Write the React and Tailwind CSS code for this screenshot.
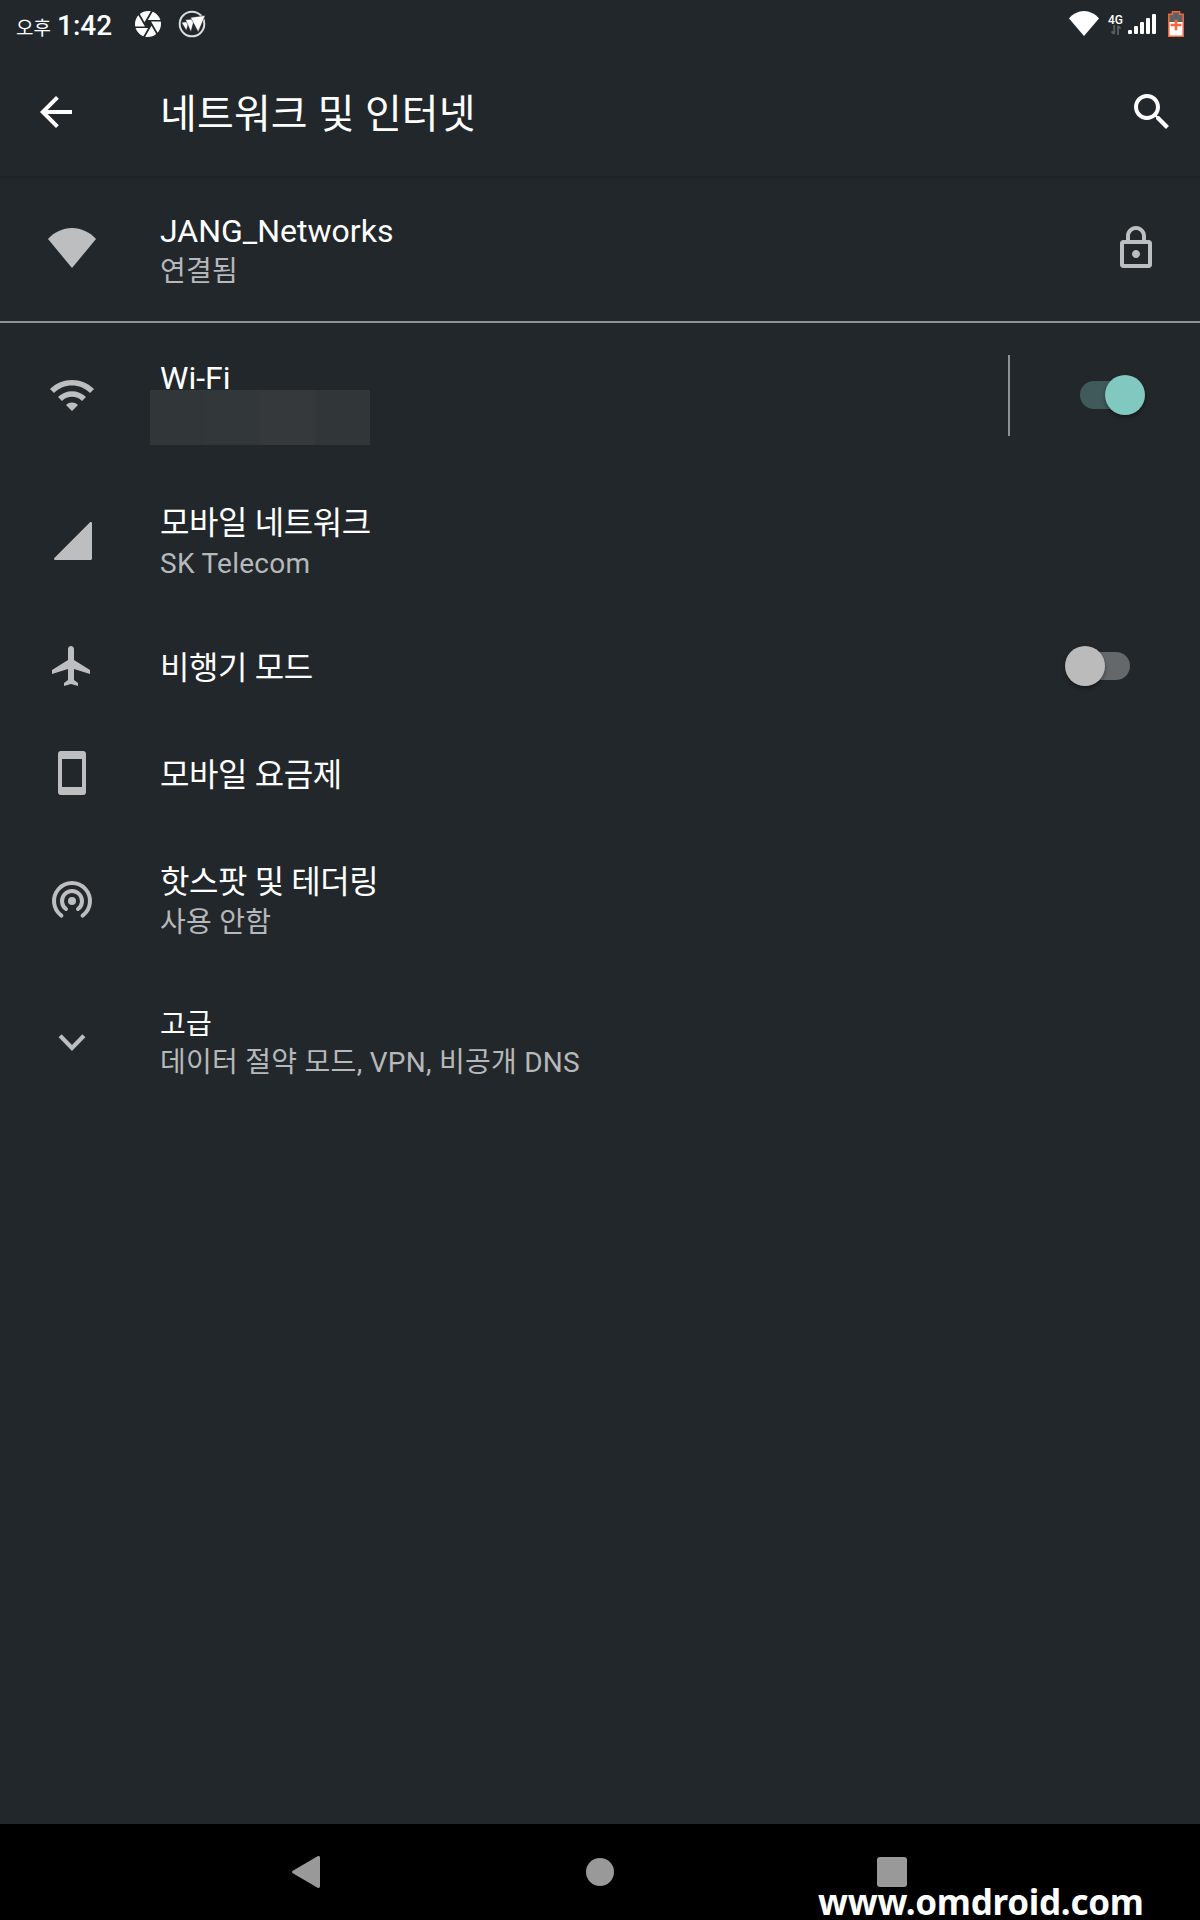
const PATHS = {
  back: 'M20 11H7.83l5.59-5.59L12 4l-8 8 8 8 1.41-1.41L7.83 13H20v-2z',
  search:
    'M15.5 14h-.79l-.28-.27C15.41 12.59 16 11.11 16 9.5 16 5.91 13.09 3 9.5 3S3 5.91 3 9.5 5.91 16 9.5 16c1.61 0 3.09-.59 4.23-1.57l.27.28v.79l5 4.99L20.49 19l-4.99-5zm-6 0C7.01 14 5 11.99 5 9.5S7.01 5 9.5 5 14 7.01 14 9.5 11.99 14 9.5 14z',
  wifi: 'M1 9l2 2c4.97-4.97 13.03-4.97 18 0l2-2C16.93 2.93 7.08 2.93 1 9zm8 8l3 3 3-3c-1.65-1.66-4.34-1.66-6 0zm-4-4l2 2c2.76-2.76 7.24-2.76 10 0l2-2C15.14 9.14 8.87 9.14 5 13z',
  wifiFull: 'M12 22L0 7.5C3.2 4 7.4 2 12 2s8.8 2 12 5.5L12 22z',
  plane:
    'M21 16v-2l-8-5V3.5c0-.83-.67-1.5-1.5-1.5S10 2.67 10 3.5V9l-8 5v2l8-2.5V19l-2 1.5V22l3.5-1 3.5 1v-1.5L13 19v-5.5l8 2.5z',
  phone:
    'M17.6 1H6.4C5.6 1 5 1.6 5 2.4v19.2c0 .8.6 1.4 1.4 1.4h11.2c.8 0 1.4-.6 1.4-1.4V2.4c0-.8-.6-1.4-1.4-1.4zM17 19H7V5h10v14z',
  signal: 'M22 3.6v17.8c0 .35-.25.6-.6.6H3.6c-.55 0-.8-.6-.42-1L21 3.18c.4-.38 1-.13 1 .42z',
  chevron: 'M17.2 8.1L12 13.5 6.8 8.1 5.3 9.6l6.7 6.9 6.7-6.9z',
  lock: 'M18.4 8H17V6c0-2.76-2.24-5-5-5S7 3.24 7 6v2H5.6C4.7 8 4 8.7 4 9.6v10.8c0 .9.7 1.6 1.6 1.6h12.8c.9 0 1.6-.7 1.6-1.6V9.6c0-.9-.7-1.6-1.6-1.6zM9 6c0-1.66 1.34-3 3-3s3 1.34 3 3v2H9V6zm9 14H6V10h12v10zm-6-3c1.1 0 2-.9 2-2s-.9-2-2-2-2 .9-2 2 .9 2 2 2z',
  aperture:
    'M9.4 10.5l4.77-8.26C13.47 2.09 12.75 2 12 2c-2.4 0-4.6.85-6.32 2.25l3.66 6.35.06-.1zM21.54 9c-.92-2.92-3.15-5.26-6-6.34L11.88 9h9.66zm.26 1h-7.49l.29.5 4.76 8.25C21 16.97 22 14.61 22 12c0-.69-.07-1.35-.2-2zM8.54 12l-3.9-6.75C3.01 7.03 2 9.39 2 12c0 .69.07 1.35.2 2h7.49l-1.15-2zm-6.08 3c.92 2.92 3.15 5.26 6 6.34L12.12 15H2.46zm11.27 0l-3.9 6.76c.7.15 1.42.24 2.17.24 2.4 0 4.6-.85 6.32-2.25l-3.66-6.35-.93 1.6z',
};

function Icon({ name, className = 'text-[#bdbec0]' }) {
  return (
    <svg viewBox="0 0 24 24" fill="currentColor" className={`size-12 shrink-0 ${className}`}>
      <path d={PATHS[name]} />
    </svg>
  );
}

function Hotspot() {
  return (
    <svg viewBox="0 0 24 24" className="size-12 shrink-0 text-[#bdbec0]" fill="none" stroke="currentColor" strokeWidth="2" strokeLinecap="round">
      <circle cx="12" cy="13" r="2" fill="currentColor" stroke="none" />
      <path d="M9 17a5 5 0 1 1 6 0" />
      <path d="M6.7 20.3a9 9 0 1 1 10.6 0" />
    </svg>
  );
}

function Switch({ on = false }) {
  return (
    <div className="flex h-10 w-20 items-center">
      <div className={`mx-[15px] flex h-7 w-[50px] shrink-0 items-center rounded-full ${on ? 'justify-end bg-[#405a5b]' : 'justify-start bg-[#64686b]'}`}>
        <div className={`size-10 shrink-0 rounded-full shadow-[0_2px_4px_rgba(0,0,0,0.4)] ${on ? '-mr-[15px] bg-[#80c8c0]' : '-ml-[15px] bg-[#bbbbbb]'}`} />
      </div>
    </div>
  );
}

function Row({ icon, title, sub, height, children, text = 'pt-[7px]', font = 'text-[32px] tracking-[-0.4px]', className = '' }) {
  return (
    <div className={`flex w-full shrink-0 items-center pb-px pl-12 ${height} ${className}`}>
      {icon}
      <div className={`ml-16 flex-1 ${text}`}>
        <div className={`leading-[38px] text-white ${font}`}>{title}</div>
        {sub}
      </div>
      {children}
    </div>
  );
}

function Sub({ className = 'mt-[3px]', children }) {
  return <div className={`text-[28px] leading-[38px] tracking-[0.27px] text-[#b6b8b9] ${className}`}>{children}</div>;
}

function StatusBar() {
  return (
    <div className="flex h-12 shrink-0 items-center text-white">
      <div className="flex items-baseline pl-4 pt-[7px]">
        <span className="text-[19px] leading-[48px]">오후</span>
        <span className="ml-[6px] text-[28px] font-medium leading-[48px]">1:42</span>
      </div>
      <svg viewBox="2 2 20 20" className="ml-[23px] size-[26px]" fill="#fff">
        <path d={PATHS.aperture} />
      </svg>
      <svg viewBox="0 0 28 28" className="ml-[17px] size-7">
        <circle cx="14" cy="14" r="12.3" fill="none" stroke="#dcdddd" strokeWidth="2" />
        <g fill="#fff" stroke="#22272b" strokeWidth=".5">
          <path d="M3.5 12.4l7.5-1-2.6 9z" />
          <path d="M7.5 9.8l9-1-3.6 13z" />
          <path d="M12.5 7.4L27.2 5.5l-7 16.4z" />
        </g>
      </svg>
      <div className="ml-auto flex items-start pr-4">
        <svg viewBox="0 0 30 25" className="h-[25px] w-[30px]">
          <path d="M15 25L0 7.5C4 2.8 9.4 0 15 0s11 2.8 15 7.5z" fill="#fff" />
        </svg>
        <div className="ml-[9px] flex w-[15px] flex-col items-center">
          <span className="mt-[2px] text-[12px] font-medium leading-[14px]">4G</span>
          <svg viewBox="0 0 10 10" className="-mt-[2px] h-[10px] w-[10px]" stroke="#5b5f62" strokeWidth="1.8" fill="none">
            <path d="M3.2 0v9M.5 6.5l2.7 2.5M7 10V1M7 1l2.5 2.5" />
          </svg>
        </div>
        <svg viewBox="0 0 28 20" className="ml-[5px] mt-[3px] h-5 w-7" fill="#fff">
          <rect x="0" y="16" width="4" height="4" rx="1" />
          <rect x="6" y="12" width="4" height="8" rx="1" />
          <rect x="12" y="8" width="4" height="12" rx="1" />
          <rect x="18" y="4" width="4" height="16" rx="1" />
          <rect x="24" y="0" width="4" height="20" rx="1" />
        </svg>
        <svg viewBox="0 0 16 26" className="ml-3 h-[26px] w-4">
          <path d="M.8 3.3h3.6V.8h7.2v2.5h3.6v21.9H.8z" fill="#5e6265" />
          <path d="M1 11h14v14H1z" fill="#fff" />
          <path d="M.8 3.3h3.6V.8h7.2v2.5h3.6v21.9H.8z" fill="none" stroke="#f4683c" strokeWidth="1.5" />
          <path d="M8 8.7v10.6M2.6 14h10.8" stroke="#f4683c" strokeWidth="2.6" />
        </svg>
      </div>
    </div>
  );
}

export default function App() {
  return (
    <div className="relative flex h-[1920px] w-[1200px] flex-col overflow-hidden bg-[#22272b] font-['Roboto','Noto_Sans_CJK_KR',sans-serif]">
      <StatusBar />
      <header className="flex h-32 shrink-0 items-center pl-8 pr-6 shadow-[0_2px_3px_rgba(0,0,0,0.12)]">
        <Icon name="back" className="text-white" />
        <h1 className="ml-20 flex-1 pt-[5px] text-[40px] leading-[48px] tracking-[0.15px] text-white">네트워크 및 인터넷</h1>
        <Icon name="search" className="text-white" />
      </header>

      <main className="flex flex-1 flex-col">
        <Row icon={<Icon name="wifiFull" />} title="JANG_Networks" font="text-[32px]" sub={<Sub>연결됨</Sub>} height="h-[147px]" className="border-b-2 border-[#8f9294]">
          <Icon name="lock" className="mr-10 text-[#bdbec0]" />
        </Row>
        <Row
          icon={<Icon name="wifi" />}
          title="Wi-Fi"
          font="text-[32px]"
          sub={
            <div className="-my-[7px] -ml-[10px] flex h-[55px] w-[220px]">
              <div className="flex-1 bg-[#313639]" />
              <div className="flex-1 bg-[#32373a]" />
              <div className="flex-1 bg-[#35393c]" />
              <div className="flex-1 bg-[#313639]" />
            </div>
          }
          height="h-[145px]"
        >
          <div className="mr-[55px] mt-px h-[81px] w-[2px] bg-[#8f9294]" />
          <div className="mr-[55px]">
            <Switch on />
          </div>
        </Row>
        <Row icon={<Icon name="signal" />} title="모바일 네트워크" sub={<Sub>SK Telecom</Sub>} height="h-[145px]" />
        <Row icon={<Icon name="plane" />} title="비행기 모드" text="pt-1" height="h-[107px]">
          <div className="mr-[55px]">
            <Switch />
          </div>
        </Row>
        <Row icon={<Icon name="phone" />} title="모바일 요금제" text="pt-1" height="h-[107px]" />
        <Row icon={<Hotspot />} title="핫스팟 및 테더링" sub={<Sub>사용 안함</Sub>} height="h-[145px]" />
        <Row
          icon={<Icon name="chevron" />}
          title="고급"
          text="pt-[5px]"
          font="text-[28px] tracking-[0.27px]"
          sub={<Sub className="mt-0">데이터 절약 모드, VPN, 비공개 DNS</Sub>}
          height="h-[140px]"
        />
      </main>

      <nav className="flex h-24 shrink-0 items-center bg-black pl-[292px]">
        <svg viewBox="0 0 28 32" className="h-8 w-7" fill="#999">
          <path d="M25.6.3c1-.6 2.4 0 2.4 1.2v29c0 1.2-1.4 1.8-2.4 1.2L.8 17.2c-1-.6-1-1.8 0-2.4z" />
        </svg>
        <div className="ml-[266px] size-7 rounded-full bg-[#999]" />
        <div className="ml-[263px] size-[30px] rounded-[3px] bg-[#999]" />
      </nav>
      <div className="absolute left-[818px] top-[1883px] whitespace-nowrap font-['Noto_Sans',sans-serif] text-[35px] font-bold leading-[37px] tracking-[-0.27px] text-white">
        www.omdroid.com
      </div>
    </div>
  );
}
